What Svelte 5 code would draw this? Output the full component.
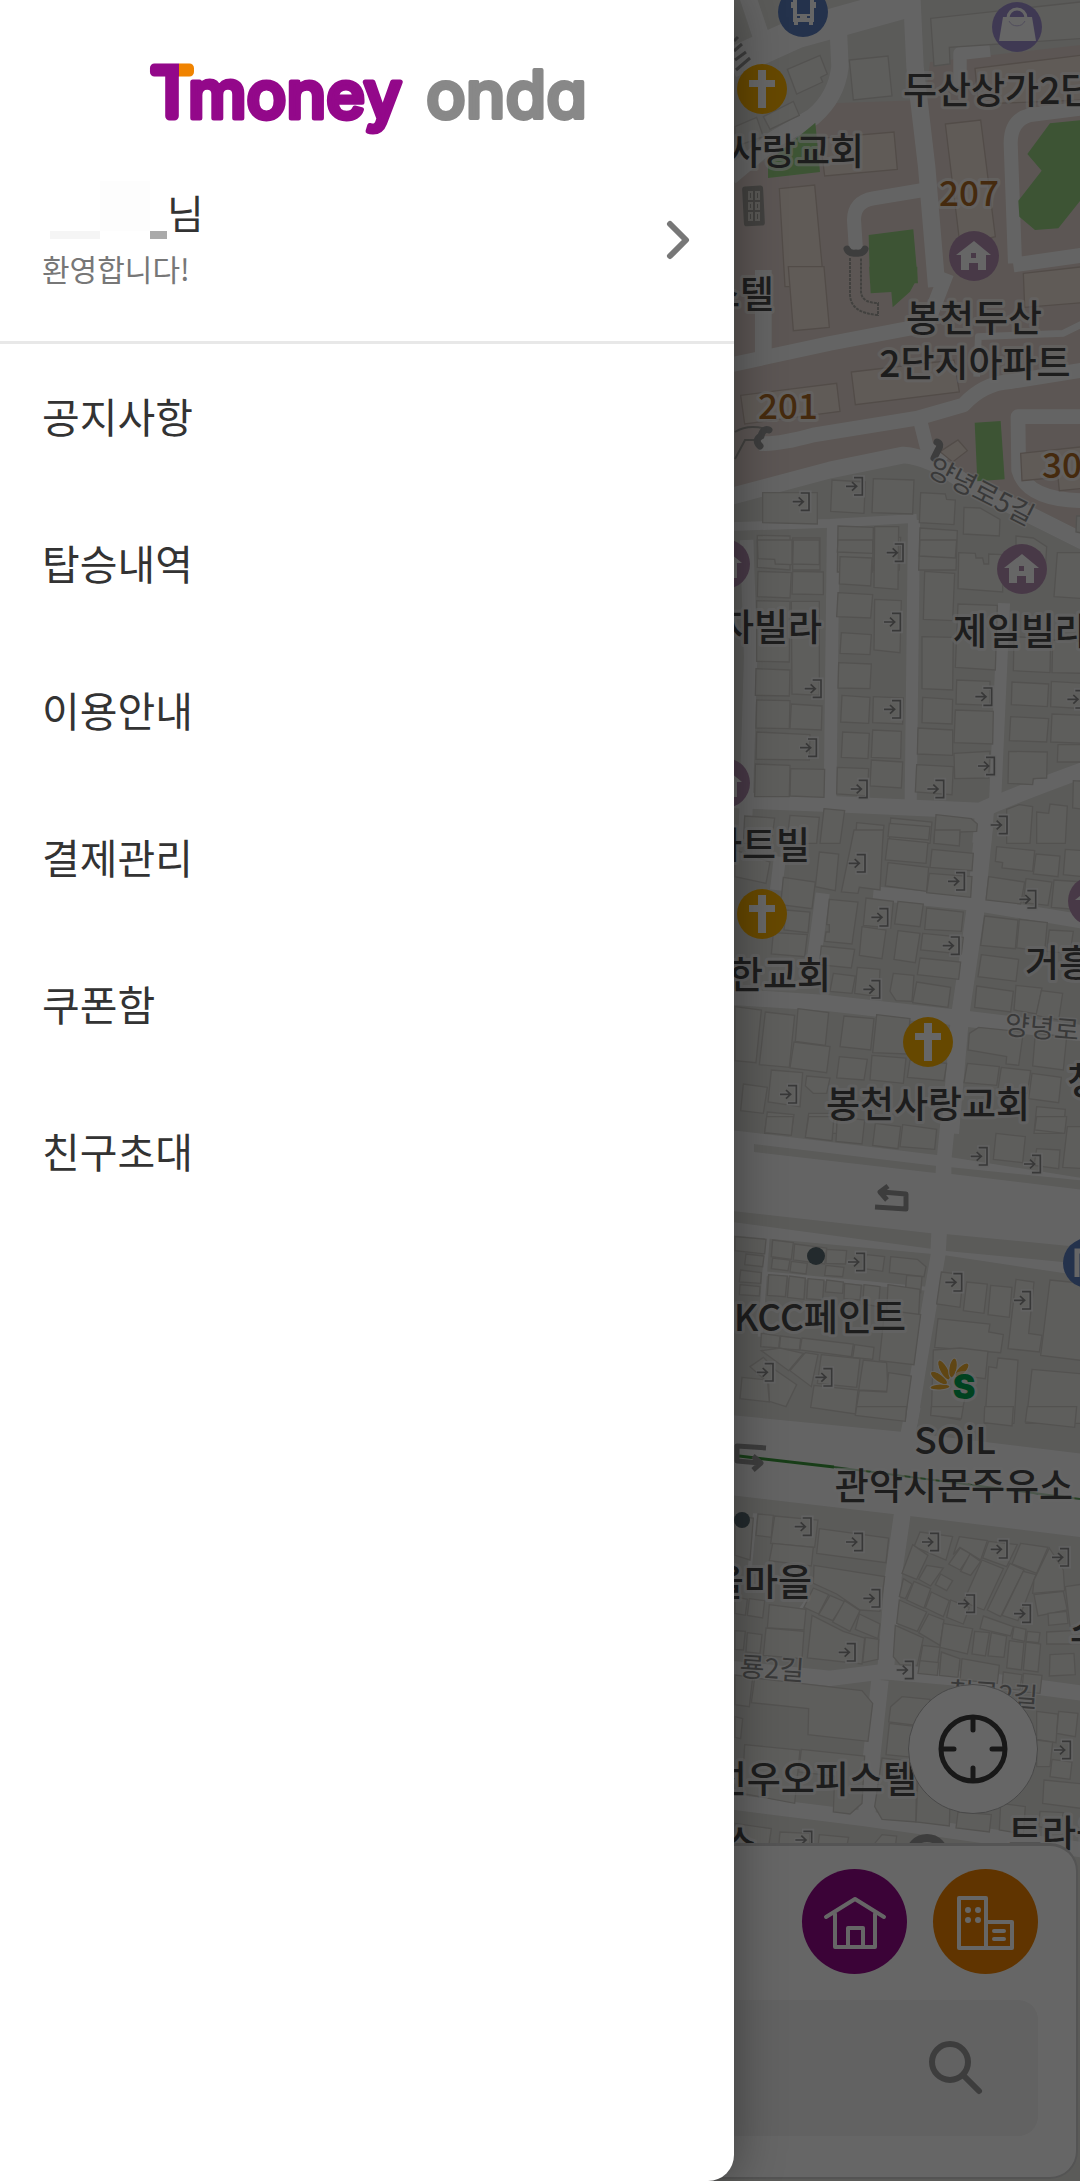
<script>
  const menu = ['공지사항', '탑승내역', '이용안내', '결제관리', '쿠폰함', '친구초대'];

  // Street tiles: every tile is drawn on a grid three times finer than the map.
  const tiles = [
    {
      y: 0,
      roads: [
        ['M0 530 130 420 250 350Q320 290 330 200L325 90', 52],
        ['M0 190 200 100 560 0', 90],
        ['M50 -20 100 130', 50],
        ['M545 -20 555 200 590 500 620 860', 52],
        ['M580 570 430 595Q372 605 372 660L378 752', 42],
        ['M1060 325 900 345Q842 360 842 430L855 790', 42],
        ['M850 795 1060 765', 44],
        ['M690 260 690 160 780 150', 40]
      ],
      buildings: [
        '602 55 1060 5 1060 115 658 142 660 192 612 198',
        '172 208 270 166 292 222 272 232 278 246 200 282',
        '358 180 474 168 486 288 370 300',
        '100 350 190 304 208 346 120 388',
        '15 380 80 352 100 410 15 440'
      ],
      flats: [
        '735 205 1060 165 1060 300 745 312',
        '646 372 752 360 796 710 690 735',
        '270 415 492 396 502 508 284 528',
        '148 566 254 555 282 860 165 860'
      ],
      parks: [
        '114 485 256 368 270 516 114 534',
        '960 370 1060 360 1060 590 985 685 915 690 868 650 865 602 935 512 892 462',
        '416 705 550 688 564 850 420 850'
      ],
      gates: []
    },
    {
      y: 270,
      roads: [
        ['M0 285 300 220 590 165 650 10', 44],
        ['M0 680 300 600 520 555Q600 560 700 635L1060 815', 50],
        ['M90 520Q140 525 250 495L560 445 700 405Q760 340 840 335L1060 300', 44],
        ['M570 450 590 530 640 580', 42],
        ['M1060 440 864 440 866 600Q890 690 1060 692', 44],
        ['M740 320 745 200 1000 190 1060 160', 20],
        ['M100 0 100 250', 50],
        ['M0 770 300 760 560 745', 26]
      ],
      buildings: [
        '98 668 262 668 262 762 98 758', '306 630 406 636 402 730 302 724',
        '430 626 552 630 548 732 426 728', '572 668 646 672 650 688 676 690 672 764 568 758',
        '702 712 750 714 810 748 808 798 700 792', '82 796 180 798 180 900 82 892',
        '188 804 270 804 270 900 188 900', '324 768 430 772 428 906 322 906',
        '436 800 512 802 508 900 432 900', '570 774 682 782 678 900 566 900',
        '858 798 910 804 950 830 946 900 858 900', '1040 738 1060 738 1060 790 1038 786'
      ],
      flats: [
        '175 -10 282 -10 298 172 190 182',
        '364 306 672 270 688 366 376 404',
        '32 376 320 340 330 424 44 462',
        '880 10 1060 -10 1060 98 884 112',
        '630 545 684 510 712 542 668 576',
        '872 550 1060 530 1060 655 988 662 984 622 876 632'
      ],
      parks: [
        '418 -10 562 -10 562 25 540 65 488 112 484 66 422 70',
        '734 458 812 453 824 628 742 634'
      ],
      gates: [[362, 649], [202, 695]]
    },
    {
      y: 540,
      roads: [
        ['M50 0 62 350 45 900', 40],
        ['M310 -50 300 790', 38],
        ['M552 -60 542 790', 36],
        ['M822 190 795 790', 36],
        ['M0 780 300 792 750 812Q840 770 1060 690', 48],
        ['M765 800 755 910', 56]
      ],
      buildings: [
        '82 0 186 0 186 74 136 72 134 58 84 56', '190 0 268 0 268 74 188 72',
        '84 94 184 98 180 174 82 170', '188 94 280 96 280 164 186 162',
        '80 182 180 184 178 366 80 364', '184 184 268 184 268 466 186 462',
        '78 386 180 390 178 468 76 466', '80 480 180 482 178 566 78 564', '184 492 276 498 274 570 180 566',
        '80 576 240 584 238 660 78 658', '76 672 180 676 178 770 74 770', '182 686 284 688 282 772 180 768',
        '324 0 428 0 428 40 322 36', '330 50 426 54 422 138 328 132', '434 -40 506 -40 504 148 432 142',
        '324 158 428 164 422 234 320 230', '434 178 514 182 510 338 432 330', '334 278 424 284 420 344 330 340',
        '326 368 424 372 420 446 324 444', '336 466 420 472 416 550 332 546', '430 470 520 474 518 552 428 548',
        '338 576 418 580 414 656 334 652', '428 570 514 574 512 656 424 652', '322 682 416 686 412 768 320 762',
        '424 660 518 666 514 744 420 738',
        '570 0 680 0 676 54 568 48', '584 94 674 100 668 242 580 238', '686 38 736 40 738 54 758 54 762 72 776 72 776 42 818 44 818 156 684 146',
        '576 290 670 292 668 450 576 446', '684 192 802 196 796 390 676 382', '578 472 668 478 666 552 576 548',
        '680 420 780 424 780 496 678 492', '676 510 790 514 788 612 672 608', '564 564 668 570 668 646 562 642',
        '672 640 780 634 776 714 674 716', '560 674 670 680 666 764 556 756',
        '982 38 1060 38 1060 176 972 170', '852 290 962 296 960 398 850 392', '968 300 1060 304 1060 400 966 398',
        '846 426 956 432 952 500 844 494', '964 424 1060 430 1060 506 962 500', '842 530 956 536 950 606 838 602',
        '966 522 1060 526 1060 610 962 606', '984 614 1060 614 1060 666 982 666', '836 634 952 636 950 714 910 716 908 734 834 730',
        '282 806 344 812 330 910 270 910', '180 826 268 832 260 910 170 910', '44 828 134 834 124 910 40 910',
        '380 848 462 856 456 910 376 910', '482 834 606 846 600 910 478 910', '618 824 724 836 742 852 740 874 690 876 688 910 612 910',
        '830 808 868 794 908 800 900 910 830 910', '920 816 956 820 960 792 1012 798 1006 910 920 910', '1030 722 1060 724 1060 808 1028 804'
      ],
      flats: [],
      parks: [],
      gates: [[484, 38], [476, 246], [238, 446], [476, 508], [224, 623], [376, 747], [606, 747], [750, 470], [758, 678], [796, 855], [1026, 478]]
    },
    {
      y: 830,
      roads: [
        ['M762 -10 735 250 690 560 660 910', 54],
        ['M430 190 740 222 1060 275', 42],
        ['M278 190 250 400', 42],
        ['M150 80 138 180', 36],
        ['M0 500 300 520 700 565 1060 610', 48]
      ],
      buildings: [
        '15 60 120 96 108 160 15 140', '160 142 256 156 246 236 152 224', '168 240 240 246 234 308 162 300',
        '130 308 232 314 224 380 124 372', '268 66 326 72 316 182 256 170', '372 0 460 0 450 180 388 172 384 190 334 186',
        '474 26 594 38 588 100 466 90', '478 -20 600 -10 596 30 474 20', '474 98 596 112 590 184 466 168',
        '606 58 730 70 726 122 600 112', '598 130 726 140 722 202 590 188', '614 0 690 0 688 48 612 40',
        '800 50 914 62 908 124 816 114 818 98 796 94', '918 72 990 78 984 140 910 132', '1006 58 1060 62 1060 140 1000 134',
        '776 140 884 156 872 222 768 210', '888 146 966 156 954 226 880 218', '972 150 1060 156 1060 240 964 232',
        '298 208 384 216 366 342 284 334 288 306 298 306 298 284 290 284', '408 204 490 214 482 294 400 286',
        '504 214 580 222 570 290 494 282', '590 234 700 246 694 304 584 298', '396 290 468 300 456 386 388 376',
        '504 302 570 310 556 398 492 388', '578 310 700 322 694 372 572 360', '570 384 692 396 686 448 562 434',
        '274 348 374 358 364 414 268 404', '382 412 450 418 446 500 374 490', '490 430 552 436 546 514 498 512 480 484',
        '560 456 662 472 654 532 548 518', '310 430 376 438 366 490 300 484',
        '764 258 864 270 856 356 752 346', '868 268 952 278 944 364 860 354', '958 300 1030 304 1020 370 950 364',
        '754 374 866 388 858 454 744 440', '740 468 850 484 842 546 734 532', '858 466 936 474 920 552 852 540',
        '934 482 998 490 986 570 918 556', '15 530 94 540 78 698 15 692', '106 546 194 556 178 712 88 704',
        '204 536 296 548 286 646 196 634', '192 636 300 650 290 728 180 714', '342 558 432 566 422 660 330 650',
        '440 554 540 566 530 672 428 668', '328 680 412 688 402 750 320 744', '426 676 528 684 520 760 420 750',
        '540 690 650 700 642 752 532 742', '124 720 218 728 210 830 114 816', '40 762 112 772 100 850 32 842',
        '230 738 300 744 290 790 250 790 226 768', '718 610 746 592 880 606 866 706 828 702 830 680 714 660',
        '916 610 1010 620 1000 720 908 708', '712 700 808 710 800 766 702 758', '814 712 902 722 892 790 804 776',
        '906 730 994 742 986 818 896 806', '112 846 192 854 184 910 104 910', '920 830 1006 838 1000 910 912 910',
        '236 850 320 850 320 910 228 910'
      ],
      flats: [],
      parks: [],
      gates: [[370, 100], [668, 154], [882, 208], [438, 262], [652, 347], [414, 478], [164, 793]]
    },
    {
      y: 1120,
      wide: '0 30 620 105 1060 175 1060 468 640 405 0 345',
      strips: ['72 72 622 138 622 160 72 96', '664 142 1060 182 1060 210 664 162', '0 272 604 340 602 386 0 305', '646 342 1060 382 1060 432 640 392'],
      roads: [
        ['M655 -10 640 140 625 400 570 720 540 910', 44],
        ['M112 350 90 650', 14],
        ['M100 460 590 506', 12]
      ],
      buildings: [
        '110 -10 190 -10 184 46 104 38', '236 -10 312 -10 306 62 226 52', '322 -10 404 0 396 72 318 64',
        '436 10 512 20 504 86 428 76', '518 14 620 28 614 88 510 80', '798 40 886 50 878 128 790 118',
        '920 86 990 90 986 146 912 136', '1012 20 1060 20 1060 146 998 142', '920 -10 1010 -10 1004 40 914 30',
        '15 350 108 358 104 402 15 392', '48 402 102 408 98 440 44 434', '128 360 190 368 184 418 124 410',
        '194 372 290 384 284 432 190 420', '290 388 350 392 346 432 288 430', '410 404 464 410 458 454 404 446',
        '128 414 180 420 174 452 124 446', '184 424 232 430 228 462 180 456', '288 436 342 442 338 470 284 466',
        '482 410 562 418 588 440 582 470 478 458', '32 450 94 458 92 490 28 486', '30 494 90 500 88 528 28 524',
        '116 464 172 468 166 530 112 526', '178 468 226 474 222 538 172 532', '234 476 282 480 278 540 230 536',
        '290 480 340 486 338 520 286 516', '344 490 394 496 390 540 342 536', '402 494 450 500 446 560 398 552',
        '530 466 576 470 572 518 526 514', '474 494 570 508 566 586 470 578',
        '464 570 572 584 552 734 448 722', '94 640 150 648 146 684 92 680', '152 648 212 656 208 690 148 686',
        '216 654 370 672 364 710 210 690', '374 674 432 682 428 718 368 712', '94 692 176 752 220 700 150 684',
        '226 698 264 704 244 800 180 752', '274 704 390 716 380 802 262 790', '400 720 470 728 474 814 386 810',
        '476 758 544 768 526 896 376 880 388 812 470 816', '252 796 384 810 376 882 242 862',
        '60 740 100 712 136 750 200 794 168 860 118 844 116 790', '36 772 112 780 118 846 30 836',
        '634 456 700 464 690 562 620 552', '710 486 772 492 762 580 700 572', '782 496 846 502 838 592 774 584',
        '858 478 912 486 896 640 936 646 928 696 834 686', '960 480 1060 490 1060 722 932 706',
        '624 596 780 612 776 636 820 644 812 698 614 682', '610 690 690 684 774 694 766 776 720 770 690 900 604 884',
        '804 714 864 720 852 910 764 910 776 740 800 744', '906 748 1060 762 1060 910 888 910'
      ],
      flats: [],
      parks: [],
      gates: [[736, 109], [896, 132], [368, 426], [660, 487], [866, 541], [94, 757], [270, 772]]
    },
    {
      y: 1410,
      wide: '0 15 520 66 1060 132 1060 382 540 318 0 255',
      strips: [],
      roads: [
        ['M550 -10 530 90', 44],
        ['M520 290 490 500 466 790', 50],
        ['M0 775 300 805 460 785 800 815 1060 850', 46],
        ['M75 310 60 470', 12],
        ['M230 570 110 740', 8]
      ],
      buildings: [
        '84 312 130 316 124 382 78 376', '134 318 264 330 254 412 122 400', '128 400 250 412 244 468 118 452',
        '268 356 476 384 468 458 260 430', '15 320 70 324 60 450 15 436', '252 466 464 500 450 604 390 600 320 552 250 520',
        '250 534 296 554 266 612 222 592', '300 556 346 576 308 632 266 614', '344 572 390 602 360 664 308 636',
        '388 612 450 642 444 686 376 658', '15 560 52 568 46 616 15 610', '58 566 104 572 98 624 52 616',
        '118 584 228 598 222 660 112 654', '108 654 222 664 216 746 100 736', '15 662 46 664 40 720 15 718', '52 668 96 674 90 730 48 726',
        '246 616 340 664 404 684 396 762 232 744', '406 682 446 688 444 748 398 758',
        '570 366 668 380 648 450 552 410', '688 380 772 392 752 450 690 412 670 434', '548 404 594 436 560 508 516 490',
        '590 466 640 474 602 528 566 508', '632 492 668 512 650 542 616 524', '690 414 722 432 690 480 656 462',
        '720 432 752 454 722 496 692 484', '756 450 820 476 762 600 700 576', '840 460 882 480 812 620 772 600',
        '880 484 918 494 864 632 816 616', '872 400 954 412 920 490 846 462', '776 394 862 404 830 470 758 444',
        '520 506 546 522 526 566 508 560', '552 514 602 536 582 594 530 570', '604 546 658 572 640 620 586 594',
        '508 570 590 606 562 664 500 640', '596 612 642 630 630 706 566 668', '662 570 718 592 700 642 650 622',
        '640 640 728 656 712 732 630 712', '734 664 778 668 766 738 726 732', '784 668 830 678 822 742 774 738',
        '760 618 850 650 842 678 750 656', '496 646 580 684 562 766 510 764 490 740', '578 706 630 712 622 770 568 764',
        '634 726 690 746 684 802 628 796', '696 746 808 766 802 820 690 810', '570 752 626 758 622 796 564 790',
        '838 692 882 698 874 780 830 774', '888 696 932 702 924 786 880 780', '852 650 888 658 884 694 846 686', '892 664 930 668 926 698 888 694',
        '912 554 1000 544 1012 600 924 618', '958 414 1000 480 1004 542 908 550 912 510', '954 610 1010 604 1014 640 956 646',
        '950 666 1060 660 1060 702 950 702', '960 734 1032 730 1036 794 958 798', '1006 530 1060 522 1060 650 1020 650',
        '820 786 876 794 870 840 816 836', '880 790 936 796 930 850 876 846',
        '380 -10 530 -10 526 34 376 16', '604 -10 700 -10 694 26 602 16', '764 -10 850 -10 846 48 762 38', '892 -10 1040 -10 1034 52 886 36'
      ],
      flats: [],
      parks: [],
      gates: [[208, 350], [362, 396], [590, 396], [796, 418], [980, 442], [414, 565], [698, 581], [866, 611], [340, 727], [514, 780]]
    },
    {
      y: 1670,
      roads: [
        ['M450 30 425 260 408 460', 52],
        ['M0 395 400 445 700 488 1060 540', 46]
      ],
      buildings: [
        '74 24 396 62 428 100 414 214 234 194 236 116 64 98', '15 15 68 22 58 110 15 104', '15 140 38 146 32 206 15 202',
        '44 224 210 240 194 400 36 370', '214 238 404 258 396 400 360 432 310 426 314 318 206 306',
        '482 110 516 80 600 88 590 170 476 156', '478 160 560 170 550 262 468 254', '456 264 560 276 558 456 456 448 434 410',
        '566 280 660 400 658 468 558 456', '684 426 784 434 778 486 678 474', '812 400 886 410 880 492 808 480',
        '920 124 984 132 978 218 920 208', '986 124 1044 130 1036 200 980 190', '966 268 1026 276 1020 328 960 320',
        '942 330 1060 342 1060 416 938 400', '930 424 1000 428 990 480 926 470', '15 460 124 476 116 530 15 530',
        '150 486 240 490 240 530 146 530', '268 494 356 502 350 530 264 530', '426 530 456 494 500 498 496 530',
        '920 210 968 216 960 290 920 290'
      ],
      flats: [],
      parks: [],
      gates: [[986, 240], [210, 510]]
    }
  ];

  const labels = [
    ['두산상가2단지', 903, 104, 'start'],
    ['봉천사랑교회', 864, 165, 'end'],
    ['오피스텔', 774, 308, 'end'],
    ['봉천두산', 974, 332, 'middle'],
    ['2단지아파트', 975, 377, 'middle'],
    ['자빌라', 822, 641, 'end'],
    ['제일빌라', 953, 645, 'start'],
    ['아트빌', 810, 859, 'end'],
    ['한교회', 831, 989, 'end'],
    ['봉천사랑교회', 928, 1118, 'middle'],
    ['거흥빌라', 1025, 977, 'start'],
    ['청솔', 1067, 1095, 'start'],
    ['KCC페인트', 906, 1331, 'end'],
    ['SOiL', 955, 1454, 'middle'],
    ['관악시몬주유소', 954, 1500, 'middle'],
    ['가을마을', 812, 1596, 'end'],
    ['선우오피스텔', 917, 1793, 'end'],
    ['스', 757, 1857, 'end'],
    ['스', 1070, 1643, 'start'],
    ['트라움', 1008, 1847, 'start']
  ];

  const numbers = [['207', 969, 206], ['201', 788, 419], ['303', 1072, 478]];

  const streets = [
    ['양녕로5길', 926, 474, 27],
    ['양녕로', 1004, 1034, 5],
    ['룡2길', 739, 1676, 4],
    ['청룡2길', 948, 1701, 4]
  ];

  const crosses = [[762, 89], [762, 914], [928, 1042]];
  const houses = [[974, 256], [1022, 569], [725, 564], [725, 783], [1093, 901]];
</script>

<div class="app">
  <svg class="map" viewBox="0 0 1080 2181" preserveAspectRatio="xMaxYMin slice" aria-label="지도">
    <defs>
      <g id="gate">
        <path class="gate-halo" d="M6 -27H36V27H6M-16 0H18" />
        <path class="gate-line" d="M10 -26H35V26H10M-14 0H18M4 -13 18 0 4 13" />
      </g>
      <g id="cross">
        <circle r="25" fill="#ffb400" />
        <path d="M-4 -19H4V-9H13V-2H4V19H-4V-2H-13V-9H-4Z" fill="#fff" />
      </g>
      <g id="house">
        <circle r="25" fill="#b58fb2" />
        <path d="M0 -15-18 -1H-13V14H-5V7H4V14H12V-1H17ZM-3 -3H2V2H-3Z" fill="#fff" fill-rule="evenodd" />
      </g>
    </defs>

    <rect width="1080" height="2181" fill="#e3e3df" />
    <path d="M735 178 800 140 835 103 925 100 930 62 1080 45V537L1010 500 903 453 735 490Z" fill="#e5d8d2" />

    {#each tiles as tile}
      <g transform="translate(730 {tile.y}) scale(0.33333)">
        {#if tile.wide}<polygon class="road-area" points={tile.wide} />{/if}
        {#each tile.strips ?? [] as strip}<polygon class="strip" points={strip} />{/each}
        {#each tile.roads as [d, width]}<path class="road" {d} stroke-width={width} />{/each}
      </g>
    {/each}
    {#each tiles as tile}
      <g transform="translate(730 {tile.y}) scale(0.33333)">
        {#each tile.buildings as points}<polygon class="building" {points} />{/each}
        {#each tile.flats as points}<polygon class="flat" {points} />{/each}
        {#each tile.parks as points}<polygon class="park" {points} />{/each}
      </g>
    {/each}

    <g class="crossing">
      <path d="M734 41 738 37M734 51 742 44M735 60 746 52M736 70 750 58" />
    </g>
    <g fill="none" stroke="#a5a39e" stroke-width="2">
      <rect x="744" y="187" width="19" height="38" rx="2" fill="#a5a39e" transform="rotate(-3 753 206)" />
      <path d="M749 192H752V199H749ZM756 192H759V199H756ZM749 203H752V209H749ZM756 203H759V209H756ZM749 213H752V220H749ZM756 213H759V220H756Z" stroke="#dedbd5" />
      <path d="M850 258V294Q850 313 878 315V303Q862 303 861 292V258" stroke-dasharray="3 1" />
      <path d="M735 432Q748 424 766 429M735 459 745 440H757" />
    </g>
    <g fill="none" stroke="#999" stroke-width="7" stroke-linecap="round">
      <path d="M847 249Q849 254 856 253Q863 254 865 249" />
      <path d="M769 430Q763 428 761 436Q754 440 760 446" />
      <path d="M937 442Q942 444 938 450L934 458" />
    </g>

    {#each tiles as tile}
      <g transform="translate(730 {tile.y}) scale(0.33333)">
        {#each tile.gates as [x, y]}<use href="#gate" {x} {y} />{/each}
      </g>
    {/each}

    <path d="M739 1456 834 1467" stroke="#3c9a3c" stroke-width="3" />
    <path d="M834 1467 1080 1499" stroke="#5fa35f" stroke-width="2" />
    <g fill="none" stroke="#999" stroke-width="5" stroke-linejoin="round">
      <path d="M875 1207 906 1209V1194L882 1192M888 1186 880 1192 887 1200" />
      <path d="M766 1448 737 1446V1461L760 1463M753 1456 761 1463 753 1470" />
    </g>
    <circle cx="816" cy="1256" r="9" fill="#586a70" />
    <circle cx="742" cy="1520" r="8" fill="#586a70" />
    <circle cx="927" cy="1856" r="18" fill="none" stroke="#999" stroke-width="8" />

    {#each streets as [name, x, y, angle]}
      <text class="street" transform="translate({x} {y}) rotate({angle})">{name}</text>
    {/each}
    {#each labels as [name, x, y, anchor]}
      <text class="place" {x} {y} text-anchor={anchor}>{name}</text>
    {/each}
    {#each numbers as [name, x, y]}
      <text class="number" {x} {y} text-anchor="middle">{name}</text>
    {/each}

    {#each crosses as [x, y]}<use href="#cross" {x} {y} />{/each}
    {#each houses as [x, y]}<use href="#house" {x} {y} />{/each}

    <circle cx="803" cy="12" r="25" fill="#5b7dbd" />
    <path d="M795 -3H812V17H795ZM796 19V25M811 19V25" fill="none" stroke="#fff" stroke-width="4" />
    <path d="M793 14H814V22H793ZM791 2H793V8H791ZM814 2H816V8H814Z" fill="#fff" />
    <path d="M797 16H800V18H797ZM807 16H810V18H807Z" fill="#5b7dbd" />

    <circle cx="1017" cy="27" r="25" fill="#9f8fd0" />
    <path d="M1003 17H1032L1036 41H999Z" fill="#fff" />
    <path d="M1008 19V18A9 9 0 0 1 1026 18V19" fill="none" stroke="#fff" stroke-width="3" />
    <path d="M1009 21A9 9 0 0 0 1025 21" fill="none" stroke="#c9c0e6" stroke-width="1" />

    <circle cx="1088" cy="1263" r="25" fill="#5b7dbd" />
    <path d="M1077 1277V1251H1088" fill="none" stroke="#fff" stroke-width="5" />

    <g fill="#f0b030" stroke="#fff" stroke-width="1">
      <ellipse cx="940" cy="1387" rx="10" ry="3" transform="rotate(-4 940 1387)" />
      <ellipse cx="939" cy="1378" rx="10" ry="4" transform="rotate(35 939 1378)" />
      <ellipse cx="944" cy="1370" rx="11" ry="4" transform="rotate(62 944 1370)" />
      <ellipse cx="953" cy="1368" rx="10" ry="4" transform="rotate(100 953 1368)" />
      <ellipse cx="962" cy="1370" rx="9" ry="4" transform="rotate(135 962 1370)" />
    </g>
    <text class="soil" x="964" y="1399" text-anchor="middle">S</text>
  </svg>

  <main class="stage">
    <button class="locate" aria-label="현재 위치">
      <svg viewBox="0 0 72 72" aria-hidden="true">
        <circle cx="36" cy="36" r="32" />
        <path d="M36 5V17M36 55V67M5 36H17M55 36H67" />
      </svg>
    </button>
    <section class="sheet">
      <div class="shortcuts">
        <button class="round home" aria-label="집">
          <svg viewBox="0 0 64 60" aria-hidden="true">
            <path d="M3 25 32 7 61 25M12 22V55H52V22M25 54V36H40V54" />
          </svg>
        </button>
        <button class="round office" aria-label="회사">
          <svg viewBox="0 0 64 60" aria-hidden="true">
            <path d="M5 6H32V56H5ZM32 30H58V56H32M40 39H50M40 47H50" />
            <path class="dots" d="M14 18h.01M24 18h.01M14 28h.01M24 28h.01" />
          </svg>
        </button>
      </div>
      <button class="search" aria-label="검색">
        <svg viewBox="0 0 56 56" aria-hidden="true">
          <circle cx="22" cy="22" r="18" />
          <path d="M36 36 51 51" />
        </svg>
      </button>
    </section>
  </main>

  <div class="scrim"></div>

  <aside class="drawer">
    <header>
      <svg class="logo" viewBox="0 0 450 80" role="img" aria-label="Tmoney onda">
        <defs>
          <linearGradient id="two-tone" gradientUnits="userSpaceOnUse" x1="0" y1="0" x2="100" y2="0">
            <stop offset="0.37" stop-color="#93088a" />
            <stop offset="0.37" stop-color="#f08300" />
          </linearGradient>
        </defs>
        <text class="mark" x="30" y="56" text-anchor="middle">T</text>
        <text class="brand" x="46" y="58">money</text>
        <text class="service" x="284" y="58">onda</text>
      </svg>
    </header>
    <a class="user" href="#profile">
      <span class="who">
        <span class="name"><span class="masked"><i></i><i></i><i></i></span>님</span>
        <span class="greeting">환영합니다!</span>
      </span>
      <svg class="chevron" viewBox="0 0 30 44" aria-hidden="true"><path d="M6 6 22 22 6 38" /></svg>
    </a>
    <nav>
      {#each menu as item}
        <a href="#menu">{item}</a>
      {/each}
    </nav>
  </aside>
</div>

<style>
  :global(body) {
    margin: 0;
  }
  .app {
    position: relative;
    display: grid;
    min-height: 100vh;
    overflow: hidden;
    font-family: 'Noto Sans CJK KR', 'Noto Sans', sans-serif;
    color: #333;
  }
  button {
    display: flex;
    padding: 0;
    border: 0;
    font: inherit;
    cursor: pointer;
  }
  a {
    color: inherit;
    text-decoration: none;
  }
  svg {
    display: block;
  }

  .map {
    position: absolute;
    inset: 0;
    width: 100%;
    height: 100%;
  }
  .road {
    fill: none;
    stroke: #fbfbfb;
    stroke-linejoin: round;
  }
  .road-area {
    fill: #fbfbfb;
  }
  .strip {
    fill: #e3e3df;
  }
  .building {
    fill: #ebeae5;
    stroke: #cfcdc8;
    stroke-width: 4;
  }
  .flat {
    fill: #f0e3da;
    stroke: #cdbdb4;
    stroke-width: 4;
  }
  .park {
    fill: #98d282;
  }
  .crossing {
    fill: none;
    stroke: #999;
    stroke-width: 3;
  }
  .gate-halo {
    fill: none;
    stroke: #f6f6f6;
    stroke-width: 13;
  }
  .gate-line {
    fill: none;
    stroke: #8c8c8c;
    stroke-width: 5;
  }
  .place,
  .number,
  .street,
  .soil {
    paint-order: stroke;
    stroke: rgba(255, 255, 255, 0.6);
    stroke-width: 6px;
    stroke-linejoin: round;
  }
  .place {
    fill: #4a4a4a;
    font-size: 37px;
    font-weight: 500;
  }
  .number {
    fill: #ad6a24;
    font-size: 35px;
    font-weight: 500;
  }
  .street {
    fill: #8f8f8f;
    font-size: 27px;
    stroke-width: 3px;
  }
  .soil {
    fill: #00a651;
    font-family: Inter, sans-serif;
    font-size: 34px;
    font-weight: 900;
  }

  .stage {
    position: relative;
    display: flex;
    flex-direction: column;
    justify-content: flex-end;
    padding-bottom: 2px;
  }
  .locate {
    align-self: flex-end;
    align-items: center;
    justify-content: center;
    width: 130px;
    height: 130px;
    margin: 0 42px 29px;
    border: 1px solid #b5b5b5;
    border-radius: 50%;
    background: #fff;
  }
  .locate svg {
    width: 72px;
    fill: none;
    stroke: #3c3c3c;
    stroke-width: 5;
    stroke-linecap: round;
  }
  .sheet {
    display: flex;
    flex-direction: column;
    gap: 26px;
    margin-right: 2px;
    padding: 23px 38px 41px;
    border: 3px solid #d2d2d2;
    border-right-width: 2px;
    border-bottom-width: 2px;
    border-radius: 28px;
    background: #fff;
  }
  .shortcuts {
    display: flex;
    justify-content: flex-end;
    gap: 26px;
  }
  .round {
    align-items: center;
    justify-content: center;
    width: 105px;
    height: 105px;
    border-radius: 50%;
  }
  .round svg {
    width: 64px;
    fill: none;
    stroke: #fff;
    stroke-width: 4;
    stroke-linecap: round;
    stroke-linejoin: round;
  }
  .round .dots {
    stroke-width: 6;
  }
  .home {
    background: #93088a;
  }
  .office {
    background: #f08300;
  }
  .search {
    align-items: center;
    justify-content: flex-end;
    height: 136px;
    padding: 0 54px;
    border-radius: 20px;
    background: #f4f4f4;
  }
  .search svg {
    width: 56px;
    fill: none;
    stroke: #999;
    stroke-width: 6;
    stroke-linecap: round;
  }

  .scrim {
    position: absolute;
    inset: 0;
    background: rgba(0, 0, 0, 0.6);
  }

  .drawer {
    position: absolute;
    inset: 0 32% 0 0;
    box-sizing: border-box;
    border-bottom-right-radius: 26px;
    background: #fff;
    box-shadow: 0 0 50px rgba(0, 0, 0, 0.4);
  }
  header {
    display: flex;
    justify-content: center;
    padding-top: 60px;
  }
  .logo {
    width: 450px;
    height: 80px;
  }
  .logo text {
    font-family: Inter, 'Open Sans', sans-serif;
    font-feature-settings: 'cv11';
    stroke-linejoin: round;
  }
  .logo .mark {
    font-size: 66px;
    font-weight: 300;
    fill: url(#two-tone);
    stroke: url(#two-tone);
    stroke-width: 9px;
  }
  .logo .brand {
    font-size: 66px;
    font-weight: 500;
    fill: #93088a;
    stroke: #93088a;
    stroke-width: 5px;
  }
  .logo .service {
    font-size: 66px;
    font-weight: 500;
    fill: #888;
    stroke: #888;
    stroke-width: 4px;
  }
  .user {
    display: flex;
    align-items: center;
    justify-content: space-between;
    padding: 36px 40px 53px 42px;
    border-bottom: 3px solid #e8e8e8;
  }
  .who {
    display: flex;
    flex-direction: column;
  }
  .name {
    display: flex;
    align-items: center;
    font-size: 40px;
    line-height: 72px;
  }
  .masked {
    display: grid;
    grid-template: 50px 8px / 8px 50px 50px 17px;
    margin-bottom: 4px;
  }
  .masked i:nth-child(1) {
    grid-area: 1 / 3;
    background: #fdfdfd;
  }
  .masked i:nth-child(2) {
    grid-area: 2 / 2;
    background: #f5f5f5;
  }
  .masked i:nth-child(3) {
    grid-area: 2 / 4;
    background: #aaa;
  }
  .greeting {
    font-size: 30px;
    line-height: 40px;
    color: #777;
  }
  .chevron {
    width: 30px;
    margin-top: 16px;
    fill: none;
    stroke: #777;
    stroke-width: 6;
    stroke-linecap: round;
    stroke-linejoin: round;
  }
  nav {
    display: flex;
    flex-direction: column;
  }
  nav a {
    padding: 0 42px 5px;
    font-size: 41px;
    line-height: 142px;
  }
</style>
